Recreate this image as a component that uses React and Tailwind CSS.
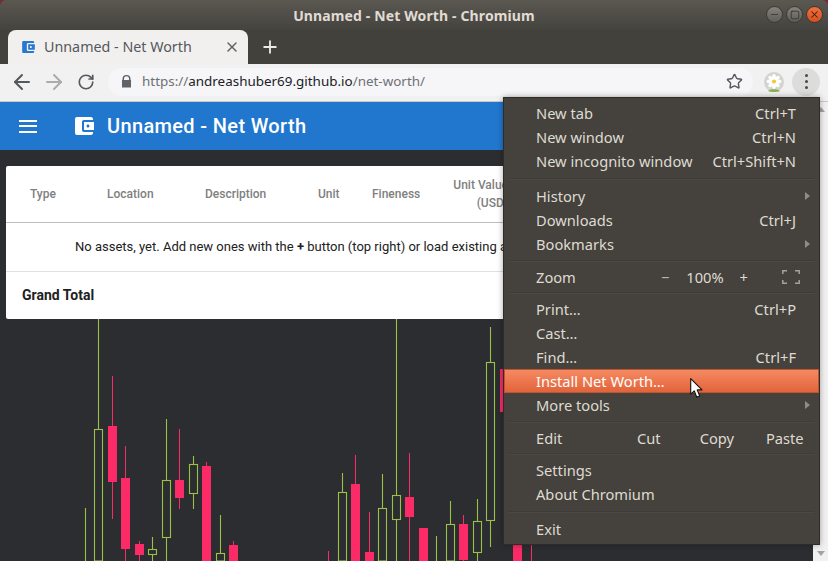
import React from 'react';
import { ArrowLeft, ArrowRight, RotateCw, Star, Plus, X, Minus, Square } from 'lucide-react';

const uiFont = 'font-["Noto_Sans",sans-serif]';

// x, wick top, wick bottom, body top, body bottom
const greenCandles = [
  [98.5, 319, 561, 429.5, 561],
  [85.5, 508, 561],
  [152.5, 537, 561, 549.5, 554.5],
  [166.5, 419, 561, 480.5, 537.5],
  [193.5, 456, 509, 464.5, 493.5],
  [220.5, 515, 561, 553.5, 561],
  [342.5, 473, 561, 492.5, 561],
  [382.5, 474, 561, 508.5, 561],
  [396.5, 319, 561, 495.5, 519.5],
  [436.5, 536, 561],
  [450.5, 501, 561, 524.5, 561],
  [477.5, 499, 561, 521.5, 552.5],
  [490.5, 327, 547, 362.5, 520.5],
];

const redCandles = [
  [112.5, 376, 519, 426, 482],
  [125.5, 446, 561, 478, 549],
  [139.5, 541, 561, 544, 555],
  [179.5, 429, 509, 480, 498],
  [206.5, 462, 561, 466, 561],
  [233.5, 541, 561, 545, 561],
  [328.5, 551, 561],
  [355.5, 455, 561, 484, 561],
  [369.5, 512, 561, 552, 561],
  [409.5, 453, 561, 497, 517],
  [423.5, 528, 561, 528, 561],
  [463.5, 515, 561, 524, 560],
  [504.5, 369, 412, 369, 412],
  [517.5, 545, 561, 545, 561],
  [531.5, 545, 561],
];

const Chart = () => (
  <svg className="absolute left-0 top-0" width="828" height="561" viewBox="0 0 828 561">
    {greenCandles.map(([x, top, bottom, bodyTop, bodyBottom]) => (
      <g key={x} stroke="#9bc244" strokeWidth="1.1">
        <line x1={x} x2={x} y1={top} y2={bottom} />
        {bodyTop && <rect x={x - 4} y={bodyTop} width="8" height={bodyBottom - bodyTop} fill="#2b2d31" />}
      </g>
    ))}
    {redCandles.map(([x, top, bottom, bodyTop, bodyBottom]) => (
      <g key={x} fill="#fd2a68">
        <rect x={x - 0.5} y={top} width="1" height={bottom - top} />
        {bodyTop && <rect x={x - 4.5} y={bodyTop} width="9" height={bodyBottom - bodyTop} />}
      </g>
    ))}
  </svg>
);

const WalletIcon = ({ className }) => (
  <svg className={className} viewBox="3 3 19 18">
    <path
      fill="currentColor"
      d="M21 18v1c0 1.1-.9 2-2 2H5c-1.11 0-2-.9-2-2V5c0-1.1.89-2 2-2h14c1.1 0 2 .9 2 2v1h-9c-1.11 0-2 .9-2 2v8c0 1.1.89 2 2 2h9zm-9-2h10V8H12v8zm4-2.5c-.83 0-1.5-.67-1.5-1.5s.67-1.5 1.5-1.5 1.5.67 1.5 1.5-.67 1.5-1.5 1.5z"
    />
  </svg>
);

const WindowButton = ({ children, className }) => (
  <div className={`flex h-[17px] w-[17px] items-center justify-center rounded-full border border-[#3a3833] ${className}`}>
    {children}
  </div>
);

const TitleBar = () => (
  <div className="relative flex h-[30px] shrink-0 items-center justify-center rounded-t-[6px] bg-gradient-to-b from-[#5b5852] to-[#45433e]">
    <span className={`${uiFont} text-[14px] font-bold tracking-[0.13px] text-[#e0dcd4]`}>
      Unnamed - Net Worth - Chromium
    </span>
    <div className="absolute right-[5px] top-[6px] flex gap-[3px]">
      <WindowButton className="bg-gradient-to-b from-[#85837c] to-[#5f5d57]">
        <Minus size={11} className="text-[#2f2e2a]" strokeWidth={1.6} />
      </WindowButton>
      <WindowButton className="bg-gradient-to-b from-[#85837c] to-[#5f5d57]">
        <Square size={10} className="text-[#2f2e2a]" strokeWidth={1.8} />
      </WindowButton>
      <WindowButton className="bg-gradient-to-b from-[#f0703c] to-[#d8501f]">
        <X size={11} className="text-[#3f1f10]" strokeWidth={2.2} />
      </WindowButton>
    </div>
  </div>
);

const TabStrip = () => (
  <div className="flex h-[34px] shrink-0 items-end bg-[#43413c] pl-[8px]">
    <div className="flex h-[34px] w-[240px] items-center rounded-t-[8px] bg-[#f1f0ef] pl-[14px] pr-[8px]">
      <WalletIcon className="h-[12px] w-[13px] text-[#2a77d0]" />
      <span className={`${uiFont} ml-[9px] flex-1 text-[14.3px] leading-none text-[#55585c]`}>Unnamed - Net Worth</span>
      <X size={16} strokeWidth={2.2} className="text-[#5f6368]" />
    </div>
    <div className="flex h-[34px] items-center pl-[12px]">
      <Plus size={20} strokeWidth={2.2} className="text-[#ecebe8]" />
    </div>
  </div>
);

const Daisy = () => (
  <svg width="20" height="20" viewBox="0 0 20 20">
    <g fill="#ffffff">
      {[0, 45, 90, 135, 180, 225, 270, 315].map((angle) => (
        <ellipse key={angle} cx="10" cy="5.5" rx="1.9" ry="3.4" transform={`rotate(${angle} 10 9.5)`} />
      ))}
    </g>
    <circle cx="10" cy="9.5" r="2.1" fill="#efc93a" />
    <path d="M4 19c1.5-2.3 10.5-2.3 12 0-3 1.3-9 1.3-12 0z" fill="#8ab04a" />
  </svg>
);

const Toolbar = () => (
  <div className="flex h-[38px] shrink-0 items-center border-b border-[#c9c9c9] bg-[#f1f1f1] pb-[2px] pl-[10px]">
    <ArrowLeft size={24} strokeWidth={2} className="text-[#55585c]" />
    <ArrowRight size={24} strokeWidth={2} className="ml-[8px] text-[#ababab]" />
    <RotateCw size={18} strokeWidth={2.2} className="ml-[11px] text-[#55585c]" />
    <div className="ml-[13px] flex h-[28px] w-[645px] items-center rounded-full bg-[#f6f6f8] pl-[13px]">
      <svg width="11" height="13" viewBox="0 0 11 13" className="text-[#5f6368]">
        <path
          fill="currentColor"
          d="M1.5 5V3.8a4 3.8 0 0 1 8 0V5h.5v7.5H1V5h.5zM3 5h5V3.8a2.5 2.5 0 0 0-5 0V5z"
        />
      </svg>
      <span className={`${uiFont} ml-[10px] text-[13.43px] leading-none text-[#6d7175]`}>
        https://<span className="text-[#202124]">andreashuber69.github.io</span>/net-worth/
      </span>
      <Star size={17} strokeWidth={2} className="ml-auto mr-[10px] text-[#55585c]" />
    </div>
    <div className="ml-[11px] flex h-[20px] w-[20px] items-center justify-center rounded-full bg-[#d3d3d1]">
      <Daisy />
    </div>
    <div className="ml-[8px] flex h-[28px] w-[28px] flex-col items-center justify-center gap-[3px] rounded-full bg-[#dcdcdb]">
      <span className="h-[3px] w-[3px] rounded-full bg-[#46484b]" />
      <span className="h-[3px] w-[3px] rounded-full bg-[#46484b]" />
      <span className="h-[3px] w-[3px] rounded-full bg-[#46484b]" />
    </div>
  </div>
);

const AppBar = () => (
  <div className="flex h-[48px] shrink-0 items-center bg-[#2077cd] pl-[19px] text-white">
    <div className="flex w-[18px] flex-col gap-[3.5px]">
      <span className="h-[2px] bg-white" />
      <span className="h-[2px] bg-white" />
      <span className="h-[2px] bg-white" />
    </div>
    <WalletIcon className="ml-[38px] h-[18px] w-[19px] text-white" />
    <span className='ml-[13px] font-["Roboto",sans-serif] text-[20px] font-medium tracking-[0.35px]'>
      Unnamed - Net Worth
    </span>
  </div>
);

const headers = [
  ['Type', 'w-[77px]'],
  ['Location', 'w-[98px]'],
  ['Description', 'w-[113px]'],
  ['Unit', 'w-[54px]'],
  ['Fineness', 'w-[81px]'],
];

const AssetCard = () => (
  <div className='relative z-10 ml-[6px] mt-[16px] w-[807px] overflow-hidden rounded-[2px] bg-white font-["Roboto",sans-serif]'>
    <div className="flex h-[57px] items-center border-b border-[#bdbdbd] pl-[24px] text-[12px] font-medium text-[#808080]">
      {headers.map(([label, width]) => (
        <div key={label} className={width}>{label}</div>
      ))}
      <div className="w-[55px] text-right leading-[18px] whitespace-nowrap">
        Unit Value
        <br />
        (USD)
      </div>
    </div>
    <div className="flex h-[49px] items-center border-b border-[#e0e0e0] pl-[69px] text-[13px] whitespace-nowrap text-[#212121]">
      <span>
        No assets, yet. Add new ones with the <b>+</b> button (top right) or load existing assets.
      </span>
    </div>
    <div className="flex h-[47px] items-center pl-[16px] text-[14px] font-bold text-[#212121]">Grand Total</div>
  </div>
);

const menuRows = [
  { label: 'New tab', keys: 'Ctrl+T' },
  { label: 'New window', keys: 'Ctrl+N' },
  { label: 'New incognito window', keys: 'Ctrl+Shift+N' },
  { sep: 'h-[11px]' },
  { label: 'History', arrow: true },
  { label: 'Downloads', keys: 'Ctrl+J' },
  { label: 'Bookmarks', arrow: true },
  { sep: 'h-[9px]' },
  { label: 'Zoom', zoom: true },
  { sep: 'h-[8px]' },
  { label: 'Print…', keys: 'Ctrl+P' },
  { label: 'Cast…' },
  { label: 'Find…', keys: 'Ctrl+F' },
  { label: 'Install Net Worth…', active: true },
  { label: 'More tools', arrow: true },
  { sep: 'h-[9px]' },
  { label: 'Edit', edit: true },
  { sep: 'h-[8px]' },
  { label: 'Settings' },
  { label: 'About Chromium' },
  { sep: 'h-[11px]' },
  { label: 'Exit' },
];

const MenuRow = ({ row }) => {
  if (row.sep) {
    return (
      <div className={`${row.sep} flex items-center px-[5px]`}>
        <div className="h-[2px] w-full bg-[#3e3c37] border-b border-[#4b4944]" />
      </div>
    );
  }
  const rowColor = row.active
    ? 'border border-[#b9552f] bg-gradient-to-b from-[#f58a62] to-[#e2633a] pl-[31px] text-white'
    : 'pl-[32px] text-[#dfdbd2]';
  return (
    <div className={`relative flex h-[24px] items-center pr-[23px] ${rowColor}`}>
      <span>{row.label}</span>
      {row.keys && <span className="ml-auto">{row.keys}</span>}
      {row.arrow && (
        <svg className="absolute right-[8px] top-[8px]" width="6" height="8" viewBox="0 0 6 8">
          <path d="M0 0l5 4-5 4z" fill="#8f8c85" />
        </svg>
      )}
      {row.zoom && (
        <div className="ml-auto flex items-center">
          <span className="mr-[2px] text-[#bdb9b0]">−</span>
          <span className="ml-[15px] mr-[3px]">100%</span>
          <span className="ml-[13px]">+</span>
          <svg className="ml-[34px] mr-[-4px]" width="18" height="14" viewBox="0 0 18 14" fill="none" stroke="#a5a29a" strokeWidth="1.5">
            <path d="M0.8 4V0.8H5M13 0.8h4.2V4M17.2 10v3.2H13M5 13.2H0.8V10" />
          </svg>
        </div>
      )}
      {row.edit && (
        <div className="absolute left-[133px] top-0 flex h-full items-center">
          <span>Cut</span>
          <span className="ml-[39px]">Copy</span>
          <span className="ml-[32px]">Paste</span>
        </div>
      )}
    </div>
  );
};

const ChromeMenu = () => (
  <div className={`${uiFont} absolute left-[503px] top-[97px] z-20 w-[317px] border border-[#2d2c28] bg-[#45423d] pb-[3px] pt-[3px] text-[14.67px] leading-none shadow-[0_0_6px_rgba(0,0,0,0.35)]`}>
    {menuRows.map((row, i) => (
      <MenuRow key={i} row={row} />
    ))}
  </div>
);

const MouseCursor = () => (
  <svg className="absolute left-[690px] top-[378px] z-30" width="13" height="21" viewBox="0 0 13 21">
    <path d="M0.7 0.7v15.5l3.6-3.3 2.4 6.2 3-1.2-2.5-6h4.8z" fill="#ffffff" stroke="#111111" strokeWidth="1.1" strokeLinejoin="round" />
  </svg>
);

const App = () => (
  <div className="relative h-[561px] w-[828px] overflow-hidden bg-[#7a2a30]">
    <div className="flex h-full flex-col">
      <TitleBar />
      <TabStrip />
      <Toolbar />
      <AppBar />
      <div className="flex-1 bg-[#2b2d31]">
        <AssetCard />
      </div>
    </div>
    <Chart />
    <div className="absolute right-0 top-[102px] flex h-[459px] w-[15px] justify-center bg-[#f1f1f1] pt-[5px]">
      <svg width="8" height="5" viewBox="0 0 8 5">
        <path d="M4 0l4 5H0z" fill="#a3a3a3" />
      </svg>
    </div>
    <svg className="absolute bottom-[5px] right-[3px] z-10" width="8" height="5" viewBox="0 0 8 5">
      <path d="M0 0h8L4 5z" fill="#a3a3a3" />
    </svg>
    <ChromeMenu />
    <MouseCursor />
  </div>
);

export default App;
